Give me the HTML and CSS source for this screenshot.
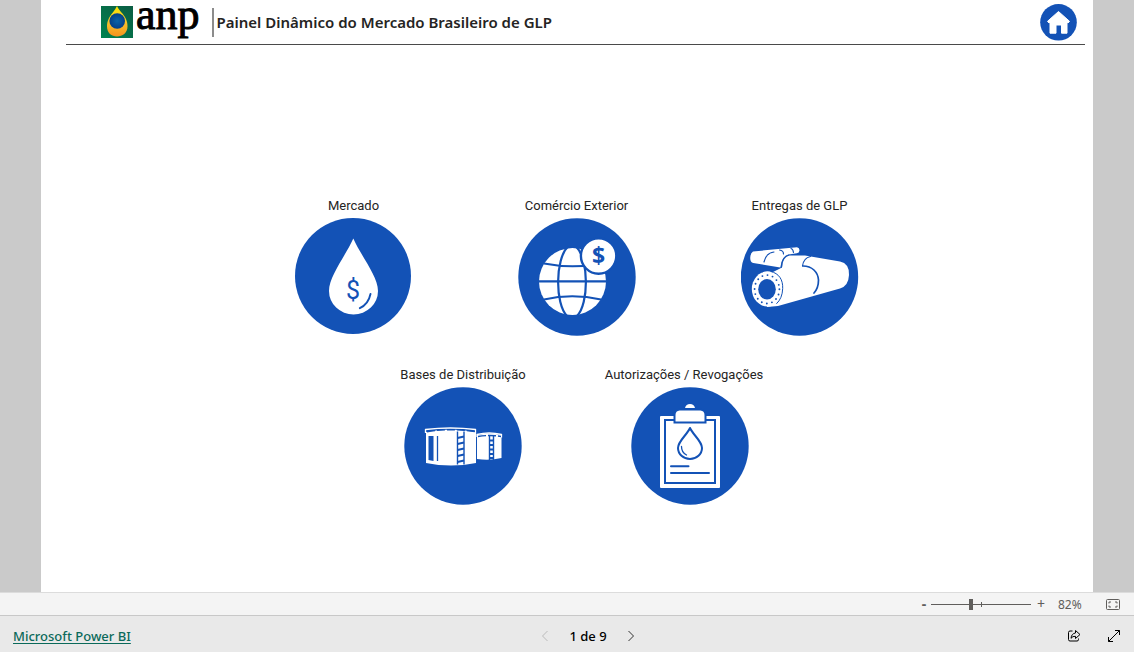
FILE: index.html
```html
<!DOCTYPE html>
<html lang="pt-BR">
<head>
<meta charset="utf-8">
<title>Painel Dinâmico do Mercado Brasileiro de GLP</title>
<link rel="stylesheet" href="styles.css">
</head>
<body>
<main class="stage">
  <div class="report">
    <header class="header">
      <div class="logo">
        <svg class="logo-mark" viewBox="0 0 32 32" aria-hidden="true">
          <defs>
            <linearGradient id="green" x1="0" y1="1" x2="1" y2="0"><stop offset="0" stop-color="#00824f"/><stop offset="1" stop-color="#0b5c43"/></linearGradient>
            <linearGradient id="gold" x1="0" y1="0" x2="0" y2="1"><stop offset="0" stop-color="#ffe600"/><stop offset=".5" stop-color="#f6c62c"/><stop offset="1" stop-color="#f6921e"/></linearGradient>
            <radialGradient id="blue"><stop offset="0" stop-color="#0b63a8"/><stop offset="1" stop-color="#063f87"/></radialGradient>
          </defs>
          <path fill="url(#green)" d="M0 0h32v32H0z"/>
          <path fill="url(#gold)" d="M16 0C14 5 10 7.500 8 12C6.500 15 6 17.500 6 20.500C6 27 10.500 30.500 16 30.500S26.500 27 26.500 20.500C26.500 17.500 26 15 24.500 12C22.500 7.500 18 5 16 0z"/>
          <circle cx="16.200" cy="15" r="7.800" fill="url(#blue)"/>
        </svg>
        <span class="logo-name">anp</span>
      </div>
      <h1 class="title">Painel Dinâmico do Mercado Brasileiro de GLP</h1>
      <button class="home" type="button" aria-label="Início">
        <svg viewBox="1040 4 37 37" aria-hidden="true">
          <circle cx="1058.500" cy="22.300" r="18.300" fill="#1352b6"/>
          <path fill="#fff" stroke="#fff" stroke-linejoin="round" d="M1058.500 11.500l11 9.800-1.500 1.700-1-.8v11h-5.500V25h-5.500v8.200h-6v-11l-1 .8-1.500-1.700z"/>
        </svg>
      </button>
    </header>

    <nav class="menu" aria-label="Seções">
      <div class="row">
        <a class="card" href="#mercado">
          <span>Mercado</span>
          <svg viewBox="295 218 118 118" aria-hidden="true">
            <circle cx="353" cy="276" r="58" fill="#1352b6"/>
            <path fill="#fff" d="M353.300 238.500C361 256 378 276 378 291A24.500 23.500 0 0 1 329 291C329 276 345.500 256 353.300 238.500z"/>
            <text class="sign-thin" x="353" y="299" text-anchor="middle">$</text>
            <path fill="none" stroke="#1352b6" stroke-width="1.900" stroke-linecap="round" d="M370.500 294q-2 10-10.700 14.200"/>
          </svg>
        </a>
        <a class="card" href="#comercio">
          <span>Comércio Exterior</span>
          <svg viewBox="518 218 118 118" aria-hidden="true">
            <circle cx="577" cy="277" r="58.700" fill="#1352b6"/>
            <circle cx="572.500" cy="281.500" r="33.500" fill="#fff"/>
            <g fill="none" stroke="#1352b6" stroke-width="2.200">
              <path d="M539 281.300h67M544 263.500Q572 269 602 263.500M544 299.500Q572 293 601 299.500"/>
              <path d="M568 246.500C555 259 555 304 567 316M576 246.500C589 259 589 304 577 316"/>
            </g>
            <circle cx="598.600" cy="256" r="17.700" fill="#fff" stroke="#1352b6" stroke-width="2.400"/>
            <text class="sign-bold" x="598.600" y="264" text-anchor="middle">$</text>
          </svg>
        </a>
        <a class="card" href="#entregas">
          <span>Entregas de GLP</span>
          <svg viewBox="741 218 118 118" aria-hidden="true">
            <circle cx="799.500" cy="277" r="58.700" fill="#1352b6"/>
            <g fill="#fff">
              <path d="M753 251.500l44-4.300q2.700.8 2.500 3.300-.2 2.500-2.700 2.800l-8 1.200q-7 1-8.500 13l-27-4.500q-3.500-1-3-6 .3-4 2.700-5.500z"/>
              <path d="M782 267.500q.5-12 7-12h16l35 6q9.500 2 9 13.500-.5 11-9 13.500l-62 17.500-11 1-4-35q6-1 9 .5z"/>
            </g>
            <ellipse cx="767.500" cy="289" rx="15.700" ry="17.500" fill="#fff"/>
            <ellipse cx="767" cy="289.300" rx="8.800" ry="10.200" fill="#1352b6"/>
            <ellipse cx="767" cy="289.300" rx="12.400" ry="14.200" fill="none" stroke="#1352b6" stroke-width="1.900" stroke-linecap="round" stroke-dasharray="0 5.240"/>
            <g fill="none" stroke="#1352b6" stroke-linecap="round">
              <path d="M771 271.500c8 2 12 8 11.700 17q-.4 10-6 15"/>
              <path stroke-width="1.200" d="M764 262q2-9 10-10M781.500 267q.5-10 7.500-12M802.500 266q1-8 8-9.500M779.500 250q4 .5 4 4M791 248.500q2 .5 2.500 4"/>
              <path stroke-width="1.700" d="M803 266c9 0 15 6 15.500 14q0 8-4.500 13"/>
            </g>
          </svg>
        </a>
      </div>
      <div class="row">
        <a class="card" href="#bases">
          <span>Bases de Distribuição</span>
          <svg viewBox="404 387 118 118" aria-hidden="true">
            <circle cx="463" cy="446" r="58.700" fill="#1352b6"/>
            <path fill="#fff" d="M426 432q24-5 50 0v31q-25 5-50 0zM477 435q12-3 24.500 0v23q-12 3-24.500 1z"/>
            <path fill="none" stroke="#fff" stroke-width="1.300" d="M425.500 433v-3.500q25-3 50 0v4M477 437v-2.500q12-3 24.500 0v3"/>
            <g fill="none" stroke="#1352b6">
              <path d="M427 431.700q24-4 48 0M478 436.500q12-2 23 0" stroke-width="1.400" stroke-dasharray="8 2"/>
              <path d="M437.500 436v25" stroke-width="1.300"/>
              <path d="M457.500 431.500v33M464 431.500v33M489.500 436v24M493.500 436v24" stroke-width="1.400"/>
              <path d="M457.500 438l6.500-1.500M457.500 444l6.500-1.500M457.500 450l6.500-1.500M457.500 456l6.500-1.500M457.500 462l6.500-1.500" stroke-width="1.800"/>
              <path d="M489.500 440.500h4M489.500 445h4M489.500 449.500h4M489.500 454h4M489.500 458h4" stroke-width="2"/>
            </g>
            <path fill="#1352b6" d="M428.500 436h5v25l-5-1z"/>
          </svg>
        </a>
        <a class="card" href="#autorizacoes">
          <span class="wide-label">Autorizações / Revogações</span>
          <svg viewBox="631 387 118 118" aria-hidden="true">
            <circle cx="690" cy="446" r="58.700" fill="#1352b6"/>
            <rect x="660" y="416" width="60" height="72" rx="1" fill="#fff"/>
            <rect x="665" y="420" width="50" height="63" fill="none" stroke="#1352b6" stroke-width="2"/>
            <path fill="#fff" stroke="#1352b6" stroke-width="2" d="M674.500 422.500V415q0-5 5-5.500h21q5 .5 5 5.500v7.500z"/>
            <path fill="#fff" d="M685 408q1-4 5-4t5 4z"/>
            <g fill="none" stroke="#1352b6" stroke-width="2" stroke-linecap="round" stroke-linejoin="round">
              <path d="M690 428c3 7 12 13 12 20a12 11 0 0 1-24 0c0-7 9-13 12-20z"/>
              <path stroke-width="1.300" d="M681.500 446.500q0 6 5 8.500"/>
              <path d="M671 466.300h17.500M671 473h38"/>
            </g>
          </svg>
        </a>
      </div>
    </nav>
  </div>
</main>

<div class="zoombar">
  <button type="button" class="step minus" aria-label="Reduzir">-</button>
  <div class="slider"><input type="range" min="0" max="100" value="40" aria-label="Zoom"></div>
  <button type="button" class="step" aria-label="Ampliar">+</button>
  <output class="percent">82%</output>
  <button type="button" class="fit" aria-label="Ajustar à página">
    <svg viewBox="0 0 14 11" fill="none" stroke="#605e5c" aria-hidden="true"><rect x=".5" y=".5" width="13" height="10" rx="1"/><path d="M5 3H3v1.500M9 3h2v1.500M3 6.500V8h2M11 6.500V8H9"/></svg>
  </button>
</div>

<footer class="footer">
  <div class="brand"><a href="#powerbi">Microsoft Power BI</a></div>
  <div class="pager">
    <button type="button" disabled aria-label="Página anterior"><svg viewBox="0 0 12 12" aria-hidden="true"><path d="M8.500 1l-5 5 5 5"/></svg></button>
    <span>1 de 9</span>
    <button type="button" aria-label="Próxima página"><svg viewBox="0 0 12 12" aria-hidden="true"><path d="M3.500 1l5 5-5 5"/></svg></button>
  </div>
  <div class="actions">
    <button type="button" aria-label="Compartilhar"><svg viewBox="0 0 14 14" aria-hidden="true"><path d="M5.500 2H3Q1.500 2 1.500 3.500v7Q1.500 12 3 12h7q1.500 0 1.500-1.500V9.500M8.500 1.500l4.500 4-4.500 4V7.300Q5.500 7 4 9.300 4.500 4.500 8.500 4z"/></svg></button>
    <button type="button" aria-label="Tela inteira"><svg viewBox="0 0 14 14" aria-hidden="true"><path d="M1.500 12.500l11-11M8 1.500h4.500V6M1.500 8v4.500H6"/></svg></button>
  </div>
</footer>
</body>
</html>
```

FILE: styles.css
```css
* { box-sizing: border-box; }

body {
  margin: 0;
  min-height: 100vh;
  display: flex;
  flex-direction: column;
  font-family: "Noto Sans", "Open Sans", sans-serif;
  color: #252423;
}

button {
  display: flex;
  align-items: center;
  justify-content: center;
  padding: 0;
  border: 0;
  background: none;
  color: inherit;
  font: inherit;
  cursor: pointer;
}

svg { display: block; }

.stage {
  flex: 1;
  display: flex;
  padding: 0 41px;
  background: #cacaca;
}

.report {
  flex: 1;
  background: #fff;
}

.header {
  display: flex;
  align-items: center;
  height: 45px;
  margin: 0 8px 0 25px;
  padding: 0 8px 0 35px;
  border-bottom: 1px solid #4a4a4a;
}

.logo {
  display: flex;
  align-items: center;
  gap: 3px;
}

.logo-mark {
  width: 32px;
  height: 32px;
}

.logo-name {
  color: #000;
  font-family: "Liberation Serif", serif;
  font-size: 44px;
  line-height: 44px;
  padding-bottom: 14px;
  -webkit-text-stroke: 1px #000;
}

.title {
  margin: 0 0 0 12px;
  padding-left: 3px;
  border-left: 2px solid #8c8c8c;
  font-size: 15px;
  line-height: 29px;
  font-weight: 600;
}

.home {
  width: 37px;
  height: 37px;
  margin-left: auto;
}

.home svg { width: 100%; }

.menu {
  display: flex;
  flex-direction: column;
  gap: 31px;
  padding: 153px 0 64px 19px;
}

.row {
  display: flex;
  justify-content: center;
  gap: 63px;
}

.row + .row { gap: 67px; }

.card {
  display: flex;
  flex-direction: column;
  align-items: center;
  gap: 5px;
  width: 160px;
  color: #252423;
  font-family: Roboto, sans-serif;
  font-size: 13px;
  line-height: 15px;
  white-space: nowrap;
  text-decoration: none;
}

.wide-label { padding-right: 12px; }

.card svg {
  width: 118px;
  height: 118px;
}

.sign-thin {
  fill: #1352b6;
  font: 400 25px Roboto, sans-serif;
}

.sign-bold {
  fill: #1352b6;
  font: 700 23px "Open Sans", sans-serif;
}

.zoombar {
  display: flex;
  align-items: center;
  justify-content: flex-end;
  height: 24px;
  padding-right: 14px;
  border-top: 1px solid #dcdcdc;
  border-bottom: 1px solid #c8c8c8;
  background: #f4f4f4;
  color: #605e5c;
  font-size: 12px;
}

.step {
  width: 16px;
  font-size: 14px;
  line-height: 20px;
}

.minus {
  width: 10px;
  font-weight: 700;
}

.slider {
  width: 100px;
  height: 12px;
  margin: 0 2px;
  background:
    linear-gradient(#605e5c, #605e5c) 50px 50% / 1px 5px no-repeat,
    linear-gradient(#605e5c, #605e5c) 0 50% / 100% 1px no-repeat;
}

.slider input {
  display: block;
  appearance: none;
  width: 100%;
  height: 12px;
  margin: 0;
  background: none;
}

.slider input::-webkit-slider-thumb {
  appearance: none;
  width: 4px;
  height: 11px;
  background: #605e5c;
}

.percent {
  width: 40px;
  padding-left: 9px;
}

.fit {
  width: 14px;
  margin-left: 17px;
}

.fit svg { width: 14px; height: 11px; }

.footer {
  display: grid;
  grid-template-columns: 1fr auto 1fr;
  align-items: center;
  height: 36px;
  padding: 3px 13px 0;
  background: #e9e9e9;
  font-size: 13px;
}

.brand a {
  color: #0b6a5a;
  font-weight: 500;
  text-underline-offset: 2px;
}

.pager {
  display: flex;
  align-items: center;
  gap: 18px;
  padding-left: 42px;
  color: #000;
  font-weight: 500;
}

.footer svg {
  fill: none;
  stroke: #000;
}

.pager svg {
  width: 12px;
  height: 12px;
  stroke: #333;
}

.pager button:disabled svg { stroke: #bbb; }

.actions {
  display: flex;
  justify-content: flex-end;
  gap: 26px;
}

.actions svg { width: 14px; height: 14px; }
```
